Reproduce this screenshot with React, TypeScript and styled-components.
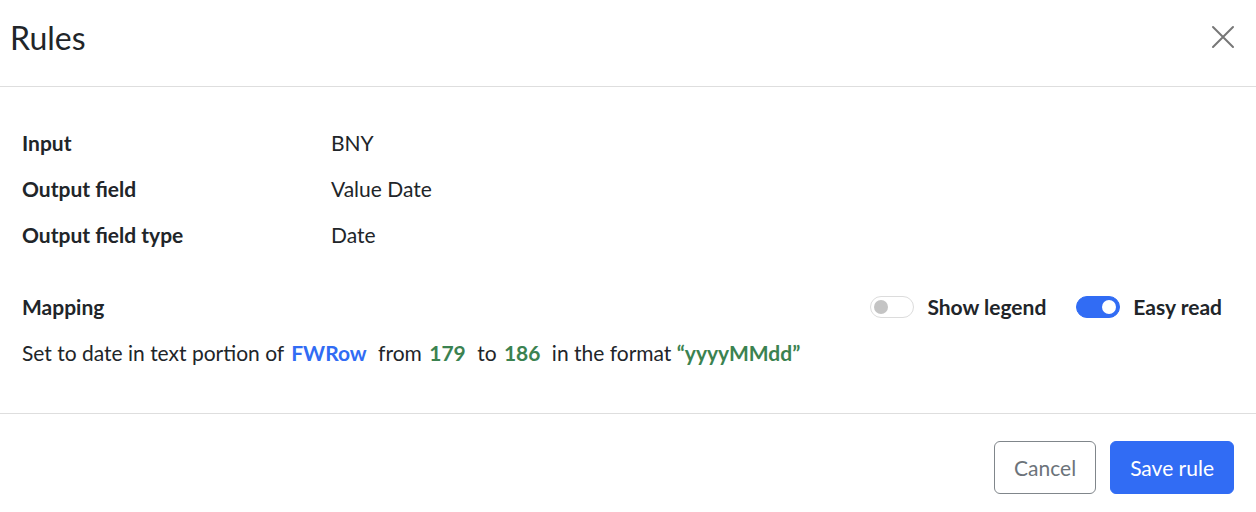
import React, { useState } from 'react';
import styled, { createGlobalStyle } from 'styled-components';

const GlobalStyle = createGlobalStyle`
  html, body {
    margin: 0;
    padding: 0;
    background: #fff;
  }
  body {
    font-family: Lato, "Liberation Sans", sans-serif;
    color: #212529;
  }
`;

const Modal = styled.div`
  width: 1256px;
  height: 512px;
  display: flex;
  flex-direction: column;
  background: #fff;
`;

const Header = styled.div`
  height: 87px;
  box-sizing: border-box;
  display: flex;
  align-items: center;
  justify-content: space-between;
  padding: 0 20px 12px 10px;
  border-bottom: 1px solid #dedede;
`;

const Title = styled.h1`
  margin: 0;
  font-size: 32px;
  font-weight: 400;
  color: #212529;
`;

const CloseButton = styled.button`
  width: 26px;
  height: 26px;
  padding: 0;
  border: none;
  background: none;
  cursor: pointer;
  display: flex;
  align-items: center;
  justify-content: center;
`;

const Body = styled.div`
  padding: 43px 22px 0;
  height: 327px;
  box-sizing: border-box;
  border-bottom: 1px solid #dedede;
`;

const InfoGrid = styled.div`
  display: grid;
  grid-template-columns: 309px 1fr;
  row-gap: 21px;
  font-size: 21px;
  line-height: 25px;
`;

const Label = styled.div`
  font-weight: 700;
  color: #212529;
`;

const Value = styled.div`
  color: #212529;
`;

const MappingHeader = styled.div`
  display: flex;
  align-items: center;
  justify-content: space-between;
  margin-top: 47px;
  font-size: 21px;
  line-height: 25px;
`;

const Toggles = styled.div`
  display: flex;
  align-items: center;
  gap: 30px;
  margin-right: 12px;
`;

const ToggleLabel = styled.label`
  display: flex;
  align-items: center;
  gap: 13px;
  font-weight: 700;
  cursor: pointer;
`;

const Track = styled.span<{ $on: boolean }>`
  position: relative;
  width: 44px;
  height: 22px;
  box-sizing: border-box;
  border-radius: 11px;
  border: 1px solid ${(p) => (p.$on ? '#316cf4' : '#dcdcdc')};
  background: ${(p) => (p.$on ? '#316cf4' : '#fff')};
`;

const Knob = styled.span<{ $on: boolean }>`
  position: absolute;
  top: 3px;
  left: ${(p) => (p.$on ? '25px' : '3px')};
  width: 14px;
  height: 14px;
  border-radius: 50%;
  background: ${(p) => (p.$on ? '#fff' : '#c4c4c4')};
`;

const Sentence = styled.p`
  margin: 21px 0 0;
  font-size: 21px;
  line-height: 25px;
  color: #212529;
`;

const Token = styled.span<{ $kind: 'field' | 'num' }>`
  font-weight: 700;
  color: ${(p) => (p.$kind === 'field' ? '#316cf4' : '#3b8250')};
  margin: 0 6px 0 2px;
`;

const Quoted = styled.span`
  font-weight: 700;
  color: #3b8250;
`;

const Footer = styled.div`
  display: flex;
  justify-content: flex-end;
  gap: 14px;
  padding: 27px 22px 0;
`;

const Button = styled.button<{ $primary?: boolean }>`
  height: 53px;
  padding: 0 19px;
  border-radius: 6px;
  font-family: Lato, "Liberation Sans", sans-serif;
  font-size: 21px;
  cursor: pointer;
  border: 1px solid ${(p) => (p.$primary ? '#316cf4' : '#80868b')};
  background: ${(p) => (p.$primary ? '#316cf4' : '#fff')};
  color: ${(p) => (p.$primary ? '#fff' : '#6c737a')};
`;

const Toggle: React.FC<{ label: string; on: boolean; onChange: () => void }> = ({ label, on, onChange }) => (
  <ToggleLabel onClick={onChange}>
    <Track $on={on}>
      <Knob $on={on} />
    </Track>
    {label}
  </ToggleLabel>
);

const App: React.FC = () => {
  const [legend, setLegend] = useState(false);
  const [easy, setEasy] = useState(true);

  return (
    <Modal>
      <GlobalStyle />
      <Header>
        <Title>Rules</Title>
        <CloseButton aria-label="Close">
          <svg width="24" height="24" viewBox="0 0 24 24">
            <path d="M2 2 L22 22 M22 2 L2 22" stroke="#777" strokeWidth="2" strokeLinecap="round" />
          </svg>
        </CloseButton>
      </Header>
      <Body>
        <InfoGrid>
          <Label>Input</Label>
          <Value>BNY</Value>
          <Label>Output field</Label>
          <Value>Value Date</Value>
          <Label>Output field type</Label>
          <Value>Date</Value>
        </InfoGrid>
        <MappingHeader>
          <Label>Mapping</Label>
          <Toggles>
            <Toggle label="Show legend" on={legend} onChange={() => setLegend(!legend)} />
            <Toggle label="Easy read" on={easy} onChange={() => setEasy(!easy)} />
          </Toggles>
        </MappingHeader>
        <Sentence>
          Set to date in text portion of <Token $kind="field">FWRow</Token> from <Token $kind="num">179</Token> to{' '}
          <Token $kind="num">186</Token> in the format <Quoted>“yyyyMMdd”</Quoted>
        </Sentence>
      </Body>
      <Footer>
        <Button>Cancel</Button>
        <Button $primary>Save rule</Button>
      </Footer>
    </Modal>
  );
};

export default App;
